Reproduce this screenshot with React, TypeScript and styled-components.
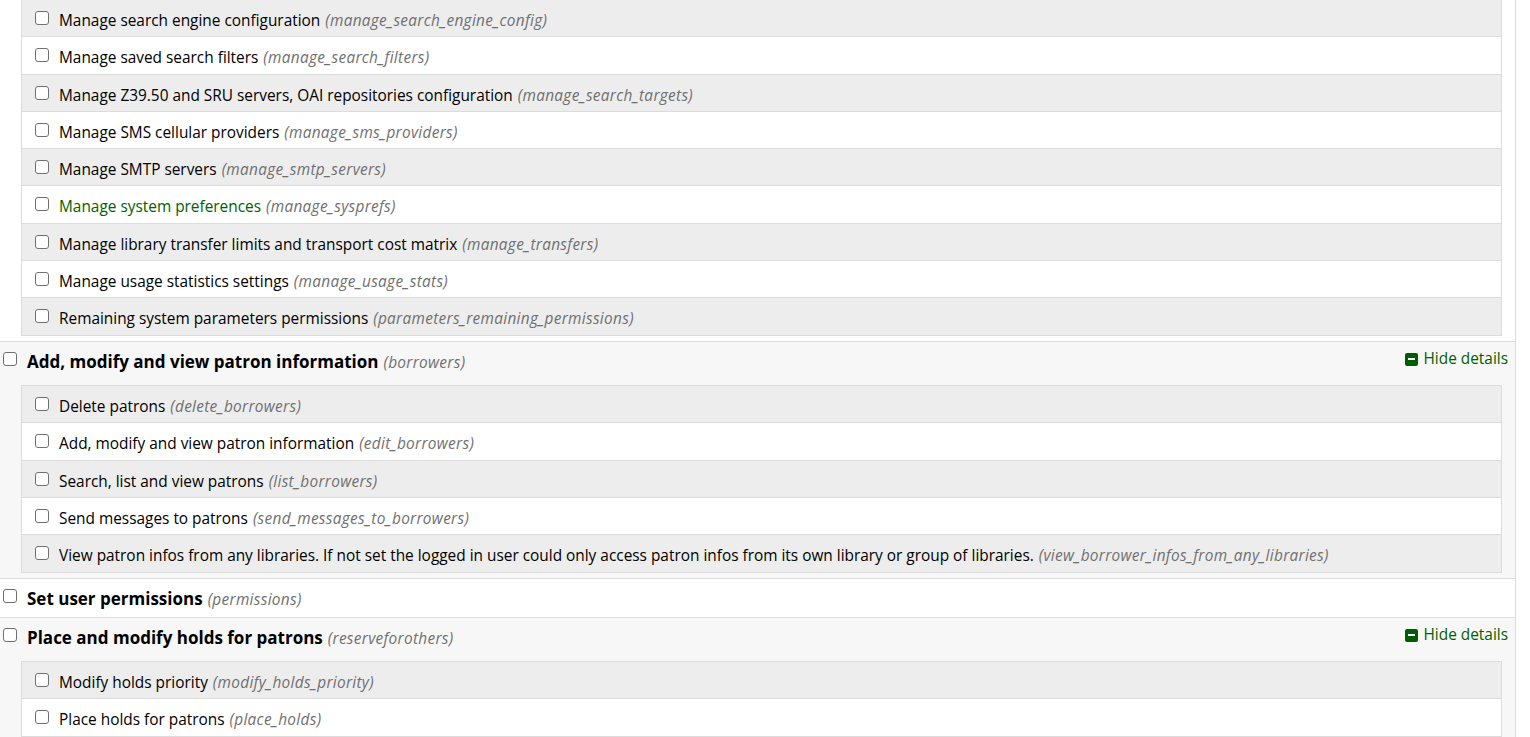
import React from "react";
import styled, { createGlobalStyle } from "styled-components";

const GlobalStyle = createGlobalStyle`
  html, body { margin: 0; padding: 0; background: #fff; }
  body {
    font-family: "Open Sans", "Noto Sans", Arial, sans-serif;
    font-size: 15.4px;
    color: #000;
  }
`;

type Child = { label: string; code: string; highlight?: boolean };
type Section = {
  title?: string;
  code?: string;
  children?: Child[];
  shaded: boolean;
};

const sections: Section[] = [
  {
    shaded: false,
    children: [
      { label: "Manage search engine configuration", code: "manage_search_engine_config" },
      { label: "Manage saved search filters", code: "manage_search_filters" },
      { label: "Manage Z39.50 and SRU servers, OAI repositories configuration", code: "manage_search_targets" },
      { label: "Manage SMS cellular providers", code: "manage_sms_providers" },
      { label: "Manage SMTP servers", code: "manage_smtp_servers" },
      { label: "Manage system preferences", code: "manage_sysprefs", highlight: true },
      { label: "Manage library transfer limits and transport cost matrix", code: "manage_transfers" },
      { label: "Manage usage statistics settings", code: "manage_usage_stats" },
      { label: "Remaining system parameters permissions", code: "parameters_remaining_permissions" },
    ],
  },
  {
    shaded: true,
    title: "Add, modify and view patron information",
    code: "borrowers",
    children: [
      { label: "Delete patrons", code: "delete_borrowers" },
      { label: "Add, modify and view patron information", code: "edit_borrowers" },
      { label: "Search, list and view patrons", code: "list_borrowers" },
      { label: "Send messages to patrons", code: "send_messages_to_borrowers" },
      {
        label:
          "View patron infos from any libraries. If not set the logged in user could only access patron infos from its own library or group of libraries.",
        code: "view_borrower_infos_from_any_libraries",
      },
    ],
  },
  { shaded: false, title: "Set user permissions", code: "permissions" },
  {
    shaded: true,
    title: "Place and modify holds for patrons",
    code: "reserveforothers",
    children: [
      { label: "Modify holds priority", code: "modify_holds_priority" },
      { label: "Place holds for patrons", code: "place_holds" },
    ],
  },
];

const List = styled.div`
  width: 1516px;
  box-sizing: border-box;
`;

const Group = styled.div<{ $shaded: boolean; $hasChildren: boolean }>`
  background: ${(p) => (p.$shaded ? "#f7f7f7" : "#fff")};
  border-right: 1px solid #dcdcdc;
  border-bottom: 1px solid #dcdcdc;
  padding-bottom: ${(p) => (p.$hasChildren ? "5.5px" : "0")};
`;

const Header = styled.div`
  display: flex;
  align-items: flex-start;
  justify-content: space-between;
  padding: 8px 7px 5px 3px;
`;

const HeaderLabel = styled.label`
  display: flex;
  align-items: flex-start;
  gap: 10px;
  line-height: 24px;
`;

const Title = styled.span`
  font-weight: 700;
  font-size: 17px;
`;

const Code = styled.span`
  font-style: italic;
  color: #707070;
  font-size: 15.4px;
  letter-spacing: 0.3px;
  margin-left: 5px;
`;

const Box = styled.input.attrs({ type: "checkbox" })<{ $offset: number }>`
  appearance: none;
  -webkit-appearance: none;
  box-sizing: border-box;
  width: 14px;
  height: 14px;
  margin: ${(p) => p.$offset}px 0 0 0;
  border: 1.5px solid #6f6f6f;
  border-radius: 3px;
  background: #fff;
  flex: none;
`;

const Toggle = styled.a`
  display: flex;
  align-items: center;
  gap: 6px;
  color: #006100;
  font-size: 15.4px;
  line-height: 20px;
  text-decoration: none;
  cursor: pointer;
  margin-top: -1px;
`;

const ToggleIcon = styled.span`
  width: 13px;
  height: 13px;
  border-radius: 2px;
  background: #005c00;
  display: inline-flex;
  align-items: center;
  justify-content: center;
  &::after {
    content: "";
    width: 7px;
    height: 2px;
    background: #fff;
  }
`;

const Children = styled.ul<{ $headless?: boolean }>`
  list-style: none;
  margin: ${(p) => (p.$headless ? "-1px" : "5px")} 13px 0 21px;
  padding: 0;
  border: 1px solid #dcdcdc;
  border-bottom: none;
`;

const ChildRow = styled.li<{ $odd: boolean }>`
  display: flex;
  align-items: flex-start;
  gap: 10px;
  box-sizing: border-box;
  height: 37.3px;
  padding: 11px 0 0 13px;
  background: ${(p) => (p.$odd ? "#fff" : "#ededed")};
  border-bottom: 1px solid #dcdcdc;
  line-height: 20px;
`;

const ChildLabel = styled.span<{ $highlight?: boolean }>`
  color: ${(p) => (p.$highlight ? "#006100" : "#000")};
`;

export default function App() {
  return (
    <>
      <GlobalStyle />
      <List>
        {sections.map((s, i) => (
          <Group key={i} $shaded={s.shaded} $hasChildren={!!s.children}>
            {s.title && (
              <Header>
                <HeaderLabel>
                  <Box $offset={2} />
                  <span>
                    <Title>{s.title}</Title>
                    <Code>({s.code})</Code>
                  </span>
                </HeaderLabel>
                {s.children && (
                  <Toggle>
                    <ToggleIcon />
                    Hide details
                  </Toggle>
                )}
              </Header>
            )}
            {s.children && (
              <Children $headless={!s.title}>
                {s.children.map((c, j) => (
                  <ChildRow key={j} $odd={j % 2 === 1}>
                    <Box $offset={0} />
                    <span>
                      <ChildLabel $highlight={c.highlight}>{c.label}</ChildLabel>
                      <Code>({c.code})</Code>
                    </span>
                  </ChildRow>
                ))}
              </Children>
            )}
          </Group>
        ))}
      </List>
    </>
  );
}
